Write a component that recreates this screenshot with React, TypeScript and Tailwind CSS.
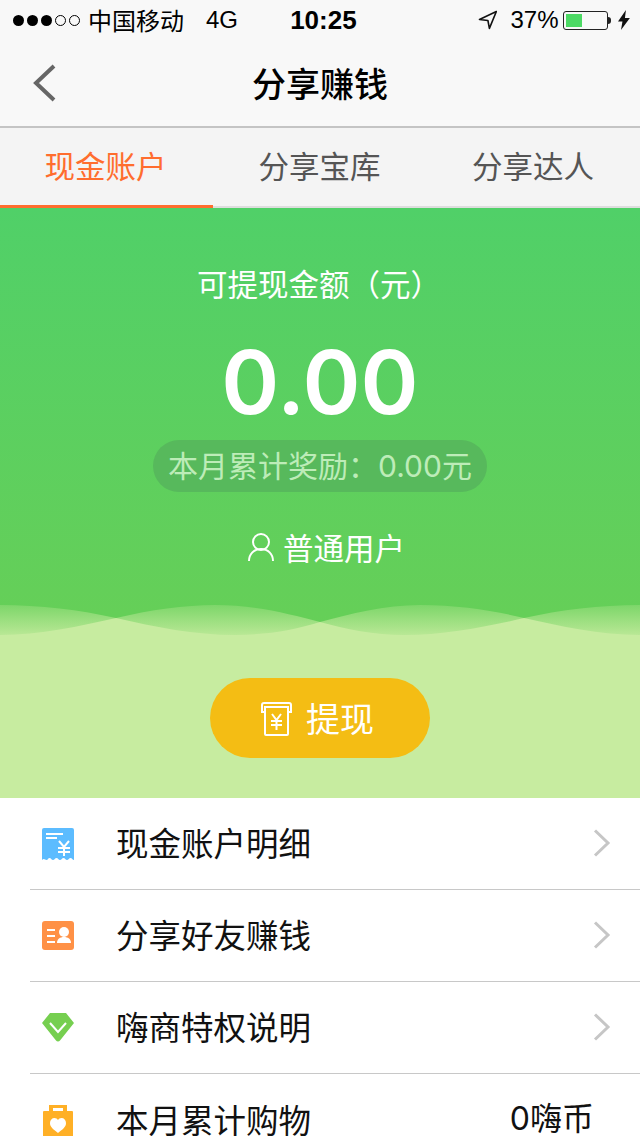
const CJK = "font-['Inter','Noto_Sans_CJK_SC',sans-serif]";

function SignalDots() {
  return (
    <div className="flex items-center gap-[3px]">
      <span className="h-[11px] w-[11px] rounded-full bg-black" />
      <span className="h-[11px] w-[11px] rounded-full bg-black" />
      <span className="h-[11px] w-[11px] rounded-full bg-black" />
      <span className="h-[11px] w-[11px] rounded-full border border-black" />
      <span className="h-[11px] w-[11px] rounded-full border border-black" />
    </div>
  );
}

function StatusBar() {
  return (
    <div className="flex h-10 items-center bg-[#f8f8f8] pr-[10px] pl-[13px] text-black">
      <SignalDots />
      <span className="ml-[8px] w-[119px] font-['Noto_Sans_CJK_SC',sans-serif] text-2xl">中国移动</span>
      <span className="w-[85px] font-['Liberation_Sans',sans-serif] text-2xl">4G</span>
      <span className="font-['Liberation_Sans',sans-serif] text-[26px] font-bold">10:25</span>
      <svg className="ml-[121px]" width="20" height="20" viewBox="0 0 20 20" fill="none" stroke="#111" strokeWidth="1.6">
        <path d="M18.5 1.5 1.5 9.5l8.5 1 1.5 8z" strokeLinejoin="round" />
      </svg>
      <span className="ml-[13px] font-['Liberation_Sans',sans-serif] text-2xl leading-none">37%</span>
      <div className="ml-[5px] h-[19px] w-[45px] rounded-[3px] border border-[#222] p-[2px]">
        <div className="h-full w-[16px] bg-[#4cd964]" />
      </div>
      <span className="h-[7px] w-[3px] rounded-r-full bg-[#222]" />
      <svg className="ml-[7px]" width="12" height="20" viewBox="0 0 12 20" fill="#111">
        <path d="M8 0 0 11.5h4.5L3 20l9-12H7z" />
      </svg>
    </div>
  );
}

function NavBar() {
  return (
    <div className="relative flex h-[88px] items-center justify-center border-b-2 border-[#c4c4c4] bg-[#f8f8f8] pb-[2px]">
      <svg className="absolute top-[24px] left-[32px]" width="26" height="38" viewBox="0 0 26 38" fill="none" stroke="#666" strokeWidth="4">
        <path d="M22 2 4 19l18 17" />
      </svg>
      <h1 className="font-['Noto_Sans_CJK_SC',sans-serif] text-[34px] font-medium text-black">分享赚钱</h1>
    </div>
  );
}

function Tabs() {
  return (
    <div className="flex h-[80px] bg-[#f4f4f4]">
      <div className="flex w-[213px] items-center justify-center border-b-[3px] border-[#ff6d2e] pr-[2px] pb-[1px] font-['Noto_Sans_CJK_SC',sans-serif] text-[30.5px] text-[#ff6d2e]">
        现金账户
      </div>
      <div className="flex w-[213px] items-center justify-center border-b-2 border-[#dddddd] pb-[2px] font-['Noto_Sans_CJK_SC',sans-serif] text-[30.5px] text-[#555555]">
        分享宝库
      </div>
      <div className="flex w-[214px] items-center justify-center border-b-2 border-[#dddddd] pb-[2px] font-['Noto_Sans_CJK_SC',sans-serif] text-[30.5px] text-[#555555]">
        分享达人
      </div>
    </div>
  );
}

function Wave() {
  return (
    <svg className="mt-auto block" width="640" height="30" viewBox="0 0 640 30">
      <defs>
        <linearGradient id="waveFill" x1="0" y1="0" x2="0" y2="1">
          <stop offset="0" stopColor="#c7eca0" stopOpacity="0.25" />
          <stop offset="1" stopColor="#c7eca0" stopOpacity="0.85" />
        </linearGradient>
      </defs>
      <path
        fill="url(#waveFill)"
        d="M0 0C40 0 80 5 116 13C150 5 185 0 215 0C255 0 290 9 320 17C350 9 385 0 420 0C460 0 495 6 524 13C560 5 600 0 640 0V30H0Z"
      />
      <path
        fill="#c7eca0"
        d="M0 30C40 30 80 21 116 13C155 22 195 30 235 30C265 30 295 25 320 17C345 24 375 30 404 30C445 30 490 21 524 13C560 21 600 30 640 30V31H0Z"
      />
    </svg>
  );
}

function Hero() {
  return (
    <div className="flex h-[427px] flex-col items-center bg-gradient-to-b from-[#50d068] to-[#66cf57] text-white">
      <p className={`mt-[55px] pr-[2px] text-[30.5px] leading-[44px] ${CJK}`}>可提现金额（元）</p>
      <p className="mt-[25px] font-['Inter',sans-serif] text-[88px] leading-[100px] font-semibold">0.00</p>
      <div className={`mt-[8px] flex h-[52px] w-[334px] items-center justify-center rounded-full bg-[#57b95c] text-[30px] whitespace-nowrap text-[#bdecb8] ${CJK}`}>
        本月累计奖励：0.00元
      </div>
      <div className="mt-[33px] flex items-center gap-[8px] pl-[12px]">
        <svg width="28" height="30" viewBox="0 0 28 30" fill="none" stroke="#fff" strokeWidth="2">
          <circle cx="14" cy="10" r="8" />
          <path d="M2 29c0-7 5-12 12-12s12 5 12 12" />
        </svg>
        <span className="font-['Noto_Sans_CJK_SC',sans-serif] text-[30.5px] leading-[44px]">普通用户</span>
      </div>
      <Wave />
    </div>
  );
}

function WithdrawPanel() {
  return (
    <div className="flex h-[163px] items-start justify-center bg-[#c7eca0] pt-[43px]">
      <button className="flex h-[80px] w-[220px] items-center justify-center gap-[13px] rounded-full bg-[#f4bd14] pr-[6px] text-white">
        <svg className="mt-[2px]" width="33" height="34" viewBox="0 0 33 34" fill="none" stroke="#fff" strokeWidth="2">
          <path d="M4 10H2V3a2 2 0 0 1 2-2h25a2 2 0 0 1 2 2v7h-2" />
          <path d="M5 5h23v27a1 1 0 0 1-1 1H6a1 1 0 0 1-1-1z" />
          <path d="m12 12 4.500 6 4.500-6M11 19h11M11 23h11M16.500 18v10" />
        </svg>
        <span className="pb-[2px] font-['Noto_Sans_CJK_SC',sans-serif] text-[34px]">提现</span>
      </button>
    </div>
  );
}

function ReceiptIcon() {
  return (
    <svg width="32" height="32" viewBox="0 0 32 32">
      <path
        fill="#5cbcff"
        d="M2 0h28a2 2 0 0 1 2 2v30c-1.500 0-2-2-3.500-2S26.500 32 25 32s-2-2-3.500-2-2 2-3.500 2-2-2-3.500-2-2 2-3.500 2-2-2-3.500-2S6 32 4.500 32 2 30 0 32V2a2 2 0 0 1 2-2z"
      />
      <path d="M4 6h17M4 10h11" stroke="#fff" strokeWidth="2" />
      <path d="m17 13 5 6 5-6M16 20h12M16 24h12M22 19v9" stroke="#fff" strokeWidth="2" fill="none" />
    </svg>
  );
}

function CardIcon() {
  return (
    <svg width="32" height="29" viewBox="0 0 32 29">
      <rect width="32" height="29" rx="3" fill="#ff9146" />
      <path d="M5 9h8M5 15h8M5 21h8" stroke="#fff" strokeWidth="2" />
      <circle cx="22" cy="11" r="5" fill="#fff" />
      <path d="M15 22c0-4 3-6 7-6s7 2 7 6z" fill="#fff" />
    </svg>
  );
}

function DiamondIcon() {
  return (
    <svg width="32" height="29" viewBox="0 0 32 29">
      <path d="M8 0h16l8 10-14 17.500a2.500 2.500 0 0 1-4 0L0 10z" fill="#76cf50" strokeLinejoin="round" />
      <path d="m8 10 8 9 8-9" fill="none" stroke="#fff" strokeWidth="2" />
    </svg>
  );
}

function BagIcon() {
  return (
    <svg width="30" height="33" viewBox="0 0 30 33">
      <path
        fill="#ffb026"
        fillRule="evenodd"
        d="M6 1h18v6h5a1 1 0 0 1 1 1v25H0V8a1 1 0 0 1 1-1h5zm4 3v3h10V4z"
      />
      <path
        fill="#fff"
        d="M15 29c-5-4-8-6-8-10 0-3 2-5 4.500-5 1.500 0 2.800.8 3.500 2 .7-1.200 2-2 3.500-2 2.500 0 4.500 2 4.500 5 0 4-3 6-8 10z"
      />
    </svg>
  );
}

function Chevron() {
  return (
    <svg className="mb-[2px]" width="18" height="28" viewBox="0 0 18 28" fill="none" stroke="#c6c6c6" strokeWidth="3">
      <path d="m2 1.500 13 12.500L2 26.500" />
    </svg>
  );
}

const rows = [
  { icon: <ReceiptIcon />, label: "现金账户明细" },
  { icon: <CardIcon />, label: "分享好友赚钱" },
  { icon: <DiamondIcon />, label: "嗨商特权说明" },
];

function Row({ icon, label, children, last }: { icon: React.ReactNode; label: string; children: React.ReactNode; last?: boolean }) {
  return (
    <div className={`ml-[30px] flex h-[92px] items-center pr-[29px] ${last ? "" : "border-b border-[#c8c8c8]"}`}>
      <div className="flex w-[57px] justify-center pr-[1px]">{icon}</div>
      <span className="mb-[3px] ml-[29px] flex-1 font-['Noto_Sans_CJK_SC',sans-serif] text-[32.5px] leading-[32px] text-[#111111]">{label}</span>
      {children}
    </div>
  );
}

export default function App() {
  return (
    <div className="h-[1136px] w-[640px] overflow-hidden bg-white">
      <StatusBar />
      <NavBar />
      <Tabs />
      <Hero />
      <WithdrawPanel />
      <div>
        {rows.map((r) => (
          <Row key={r.label} icon={r.icon} label={r.label}>
            <Chevron />
          </Row>
        ))}
        <Row icon={<BagIcon />} label="本月累计购物" last>
          <span className={`mr-[17px] mb-[3px] text-[32px] leading-[32px] text-[#111111] ${CJK}`}>0嗨币</span>
        </Row>
      </div>
    </div>
  );
}
